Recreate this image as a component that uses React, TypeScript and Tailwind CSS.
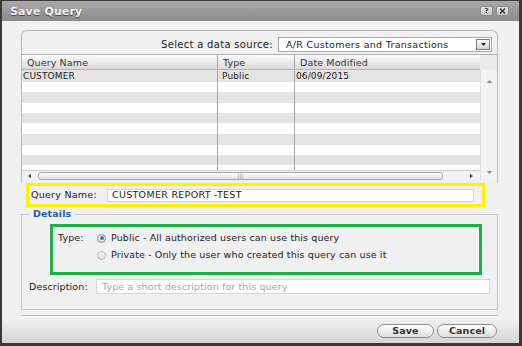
import React from "react";

const rowHeights = [12, 10, 11, 10, 10, 11, 11, 10, 10, 5];

function Radio({ checked }: { checked: boolean }) {
  return checked ? (
    <span className="w-[9px] h-[9px] rounded-full border border-[#8a8a8a] bg-gradient-to-b from-[#ffffff] to-[#dcdcdc] flex items-center justify-center shrink-0">
      <span className="w-[4px] h-[4px] rounded-full bg-[#2f6fc4]" />
    </span>
  ) : (
    <span className="w-[9px] h-[9px] rounded-full border border-[#b8b8b8] bg-gradient-to-b from-[#f4f4f4] to-[#dedede] shrink-0" />
  );
}

export default function App() {
  return (
    <div className="w-[522px] h-[346px] flex flex-col bg-[#f0f0f0] border-l-2 border-r-[3px] border-t border-b-[3px] border-[#3a3a3a] overflow-hidden [font-family:'DejaVu_Sans',Verdana,sans-serif] text-[9.5px] tracking-[0.12px] leading-none text-[#222]">
      {/* Title bar */}
      <div className="h-[20px] shrink-0 flex items-center justify-between pl-[8px] pr-[10px] bg-gradient-to-b from-[#a8a8a8] to-[#8c8c8c]">
        <span className="text-[11px] font-bold text-[#f4f4f4] [text-shadow:0_1px_1px_#3a3a3a]">Save Query</span>
        <div className="flex items-center gap-[3px]">
          <span className="w-[13px] h-[10px] rounded-[2px] bg-gradient-to-b from-[#e6e6e6] to-[#c4c4c4] border border-[#8a8a8a] flex items-center justify-center text-[7px] font-bold text-[#333]">?</span>
          <span className="w-[13px] h-[10px] rounded-[2px] bg-gradient-to-b from-[#e6e6e6] to-[#c4c4c4] border border-[#8a8a8a] flex items-center justify-center">
            <svg width="7" height="6" viewBox="0 0 7 6"><path d="M1 0.5 L6 5.5 M6 0.5 L1 5.5" stroke="#333" strokeWidth="1.4" /></svg>
          </span>
        </div>
      </div>

      {/* Body */}
      <div className="flex-1 flex flex-col pl-[19px] pr-[21px]">
        {/* Top panel */}
        <div className="mt-[9px] h-[153px] shrink-0 border border-b-0 border-[#b8b8b8] rounded-t-[6px] flex flex-col">
          <div className="h-[23px] pt-[4px] flex items-center justify-end pr-[5px] gap-[5px]">
            <span className="text-[10px] tracking-[0.3px]">Select a data source:</span>
            <div className="w-[214px] h-[15px] bg-white border border-[#a8a8a8] flex items-center pl-[7px] pr-[1px]">
              <span className="flex-1 text-[9.5px] tracking-[0.3px]">A/R Customers and Transactions</span>
              <span className="w-[14px] h-[11px] border border-[#7a7a7a] bg-gradient-to-b from-[#fafafa] to-[#d6d6d6] flex items-center justify-center">
                <svg width="5" height="3" viewBox="0 0 5 3"><path d="M0 0 H5 L2.5 3 Z" fill="#222" /></svg>
              </span>
            </div>
          </div>

          {/* Grid */}
          <div className="flex-1 border-t border-[#b0b0b0] flex">
            <div className="w-[458px] flex flex-col">
              <div className="h-[15px] flex bg-gradient-to-b from-[#fbfbfb] to-[#dadada] border-b border-[#b4b4b4] text-[#333]">
                <div className="w-[196px] border-r border-[#a6a6a6] flex items-end pb-[2px] pl-[5px]">Query Name</div>
                <div className="w-[77px] border-r border-[#a6a6a6] flex items-end pb-[2px] pl-[5px]">Type</div>
                <div className="flex-1 flex items-end pb-[2px] pl-[5px]">Date Modified</div>
              </div>
              {rowHeights.map((h, i) => (
                <div
                  key={i}
                  style={{ height: h }}
                  className={`flex text-[9px] ${i % 2 === 0 ? "bg-[#e4e4e4]" : "bg-white"}`}
                >
                  <div className="w-[196px] border-r border-[#a6a6a6] flex items-center pl-[1px]">{i === 0 ? "CUSTOMER" : ""}</div>
                  <div className="w-[77px] border-r border-[#a6a6a6] flex items-center pl-[4px]">{i === 0 ? "Public" : ""}</div>
                  <div className="flex-1 flex items-center pl-[1px]">{i === 0 ? "06/09/2015" : ""}</div>
                </div>
              ))}
              {/* Horizontal scrollbar */}
              <div className="h-[10px] bg-[#f2f2f2] border-t border-[#d0d0d0] flex items-center pl-[2px] pr-[6px]">
                <span className="w-[10px] flex justify-center">
                  <svg width="3" height="4" viewBox="0 0 3 4"><path d="M3 0 V4 L0 2 Z" fill="#444" /></svg>
                </span>
                <div className="ml-[4px] w-[405px] h-[8px] rounded-[3px] border border-[#a8a8a8] bg-gradient-to-b from-[#ffffff] to-[#e2e2e2] flex items-center justify-center">
                  <span className="text-[6px] text-[#888] tracking-[0px]">|||</span>
                </div>
                <span className="flex-1 flex justify-end pr-[1px]">
                  <svg width="3" height="4" viewBox="0 0 3 4"><path d="M0 0 V4 L3 2 Z" fill="#444" /></svg>
                </span>
              </div>
            </div>
            {/* Vertical scrollbar */}
            <div className="flex-1 flex flex-col">
              <div className="h-[15px] bg-[#ececec]" />
              <div className="h-[110px] bg-[#f2f2f2] border-l border-[#dcdcdc] flex flex-col items-center justify-between pt-[10px] pb-[6px]">
                <svg width="5" height="3" viewBox="0 0 5 3"><path d="M0 3 H5 L2.5 0 Z" fill="#888" /></svg>
                <svg width="5" height="3" viewBox="0 0 5 3"><path d="M0 0 H5 L2.5 3 Z" fill="#888" /></svg>
              </div>
            </div>
          </div>
        </div>

        {/* Query name (highlighted) */}
        <div className="ml-[5px] w-[459px] h-[24px] shrink-0 border-[3px] border-[#fff200] flex items-center pl-[2px]">
          <span className="w-[76px] tracking-[0.25px]">Query Name:</span>
          <div className="w-[367px] h-[13px] bg-white border border-[#d4d4d4] flex items-center pl-[4px] tracking-[0.3px]">CUSTOMER REPORT -TEST</div>
        </div>

        {/* Details */}
        <fieldset className="mt-[1px] border border-[#c4c4c4] min-w-0 p-0 m-0">
          <legend className="ml-[7px] px-[4px] leading-[12px] text-[9.5px] font-bold text-[#1d5ca6]">Details</legend>
          <div className="ml-[28px] mt-[4px] w-[432px] h-[51px] border-[3px] border-[#1fae48] pt-[4px] pl-[5px] flex flex-col gap-[3px]">
            <div className="h-[14px] flex items-center">
              <span className="w-[39px]">Type:</span>
              <Radio checked />
              <span className="ml-[5px]">Public - All authorized users can use this query</span>
            </div>
            <div className="h-[14px] flex items-center">
              <span className="w-[39px]" />
              <Radio checked={false} />
              <span className="ml-[5px]">Private - Only the user who created this query can use it</span>
            </div>
          </div>
          <div className="mt-[4px] mb-[15px] flex items-center pl-[7px] pr-[7px]">
            <span className="w-[67px]">Description:</span>
            <div className="flex-1 h-[15px] bg-white border border-[#d8d8d8] flex items-center pl-[5px] text-[#a8a8a8]">Type a short description for this query</div>
          </div>
        </fieldset>

        <div className="mt-[5px] h-[2px] border-t border-[#b4b4b4] border-b border-b-white" />
      </div>

      {/* Footer */}
      <div className="h-[26px] shrink-0 bg-gradient-to-b from-[#f2f2f2] to-[#d6d6d6] flex items-start justify-end pt-[7px] pr-[22px] gap-[3px]">
        <button className="w-[57px] h-[14px] rounded-full border border-[#8c8c8c] bg-gradient-to-b from-[#ffffff] to-[#dedede] text-[9.5px] font-bold text-[#333] leading-none">Save</button>
        <button className="w-[60px] h-[14px] rounded-full border border-[#8c8c8c] bg-gradient-to-b from-[#ffffff] to-[#dedede] text-[9.5px] font-bold text-[#333] leading-none">Cancel</button>
      </div>
    </div>
  );
}
